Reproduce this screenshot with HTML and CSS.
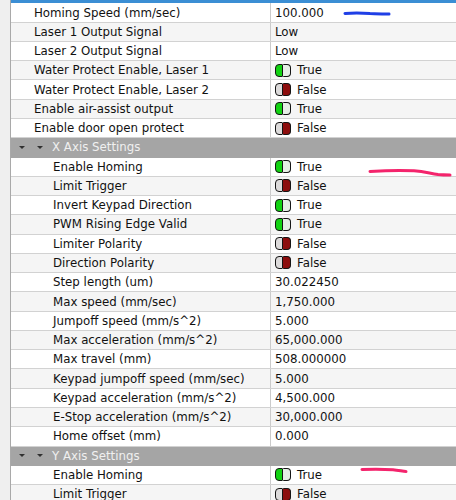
FILE: index.html
```html
<!DOCTYPE html>
<html>
<head>
<meta charset="utf-8">
<link rel="stylesheet" href="styles.css">
</head>
<body>
<div class="frame">
  <div class="gutter"></div>
  <div class="tree">
    <div class="selbar"></div>

    <div class="row"><div class="lbl top">Homing Speed (mm/sec)</div><div class="val">100.000</div></div>
    <div class="row alt"><div class="lbl top">Laser 1 Output Signal</div><div class="val">Low</div></div>
    <div class="row"><div class="lbl top">Laser 2 Output Signal</div><div class="val">Low</div></div>
    <div class="row alt"><div class="lbl top">Water Protect Enable, Laser 1</div><div class="val"><span class="tg on"><i></i><b></b></span>True</div></div>
    <div class="row"><div class="lbl top">Water Protect Enable, Laser 2</div><div class="val"><span class="tg off"><i></i><b></b></span>False</div></div>
    <div class="row alt"><div class="lbl top">Enable air-assist output</div><div class="val"><span class="tg on"><i></i><b></b></span>True</div></div>
    <div class="row"><div class="lbl top">Enable door open protect</div><div class="val"><span class="tg off"><i></i><b></b></span>False</div></div>

    <div class="row head"><span class="arr"></span><span class="arr"></span><span class="htxt">X Axis Settings</span></div>
    <div class="row"><div class="lbl sub">Enable Homing</div><div class="val"><span class="tg on"><i></i><b></b></span>True</div></div>
    <div class="row alt"><div class="lbl sub">Limit Trigger</div><div class="val"><span class="tg off"><i></i><b></b></span>False</div></div>
    <div class="row"><div class="lbl sub">Invert Keypad Direction</div><div class="val"><span class="tg on"><i></i><b></b></span>True</div></div>
    <div class="row alt"><div class="lbl sub">PWM Rising Edge Valid</div><div class="val"><span class="tg on"><i></i><b></b></span>True</div></div>
    <div class="row"><div class="lbl sub">Limiter Polarity</div><div class="val"><span class="tg off"><i></i><b></b></span>False</div></div>
    <div class="row alt"><div class="lbl sub">Direction Polarity</div><div class="val"><span class="tg off"><i></i><b></b></span>False</div></div>
    <div class="row"><div class="lbl sub">Step length (um)</div><div class="val">30.022450</div></div>
    <div class="row alt"><div class="lbl sub">Max speed (mm/sec)</div><div class="val">1,750.000</div></div>
    <div class="row"><div class="lbl sub">Jumpoff speed (mm/s^2)</div><div class="val">5.000</div></div>
    <div class="row alt"><div class="lbl sub">Max acceleration (mm/s^2)</div><div class="val">65,000.000</div></div>
    <div class="row"><div class="lbl sub">Max travel (mm)</div><div class="val">508.000000</div></div>
    <div class="row alt"><div class="lbl sub">Keypad jumpoff speed (mm/sec)</div><div class="val">5.000</div></div>
    <div class="row"><div class="lbl sub">Keypad acceleration (mm/s^2)</div><div class="val">4,500.000</div></div>
    <div class="row alt"><div class="lbl sub">E-Stop acceleration (mm/s^2)</div><div class="val">30,000.000</div></div>
    <div class="row"><div class="lbl sub">Home offset (mm)</div><div class="val">0.000</div></div>

    <div class="row head"><span class="arr"></span><span class="arr"></span><span class="htxt">Y Axis Settings</span></div>
    <div class="row"><div class="lbl sub">Enable Homing</div><div class="val"><span class="tg on"><i></i><b></b></span>True</div></div>
    <div class="row alt"><div class="lbl sub">Limit Trigger</div><div class="val"><span class="tg off"><i></i><b></b></span>False</div></div>
  </div>
</div>

<svg class="mark" width="456" height="500" viewBox="0 0 456 500">
  <path d="M345 13.5 C355 12.8 362 13 370 13.6 C378 14 384 14.2 389 14" stroke="#1f3fe6" stroke-width="3" fill="none" stroke-linecap="round"/>
  <path d="M370 171.5 C385 170.5 400 170 414 170.8 C425 171.5 430 173.5 438 174.5 C443 175 447 175 450 175" stroke="#f4246c" stroke-width="3" fill="none" stroke-linecap="round"/>
  <path d="M362 469.5 C375 469 385 469.2 393 469.8 C399 470.3 403 471.5 406 471.5" stroke="#f4246c" stroke-width="3" fill="none" stroke-linecap="round"/>
</svg>
</body>
</html>
```

FILE: styles.css
```css
html, body {
  margin: 0;
  padding: 0;
  background: #ffffff;
}

body {
  width: 456px;
  height: 500px;
  overflow: hidden;
  position: relative;
  font-family: "DejaVu Sans", Verdana, sans-serif;
  font-size: 11.8px;
  color: #111111;
}

.frame {
  display: flex;
  height: 500px;
}

.gutter {
  width: 10px;
  flex: none;
  background: #efefef;
  border-right: 1px solid #a9a9a9;
}

.tree {
  flex: 1;
  display: flex;
  flex-direction: column;
  overflow: hidden;
}

.selbar {
  height: 3.4px;
  flex: none;
  background: #3b8ed4;
}

.row {
  flex: none;
  height: 19.27px;
  box-sizing: border-box;
  border-bottom: 1px solid #d2d2d2;
  display: grid;
  grid-template-columns: 260px 1fr;
  background: #ffffff;
}

.row.alt {
  background: #f5f5f5;
}

.lbl {
  border-right: 1px solid #cbcbcb;
  display: flex;
  align-items: center;
  white-space: nowrap;
  overflow: hidden;
}

.lbl.top {
  padding-left: 23px;
}

.lbl.sub {
  padding-left: 42px;
}

.val {
  display: flex;
  align-items: center;
  padding-left: 4px;
  white-space: nowrap;
  overflow: hidden;
}

.tg {
  display: inline-flex;
  width: 16px;
  height: 13px;
  margin-right: 6px;
  flex: none;
}

.tg i, .tg b {
  display: block;
  width: 8px;
  height: 13px;
  box-sizing: border-box;
  border: 1.3px solid #141414;
}

.tg i {
  border-radius: 4px 1px 1px 4px;
}

.tg b {
  border-radius: 1px 4px 4px 1px;
  border-left: none;
}

.tg.on i { background: #12d312; }
.tg.on b { background: #e6efe6; }
.tg.off i { background: #dcdada; }
.tg.off b { background: #8c0d0d; }

.row.head {
  display: flex;
  align-items: center;
  background: #a5a5a5;
  border-bottom: 1px solid #a5a5a5;
}

.arr {
  width: 0;
  height: 0;
  border-left: 3.5px solid transparent;
  border-right: 3.5px solid transparent;
  border-top: 3.5px solid #303030;
  margin-left: 7.5px;
  margin-right: 7px;
}

.arr + .arr {
  margin-left: 5px;
  margin-right: 0;
}

.htxt {
  margin-left: 9.5px;
  color: #f0f0f0;
}

.mark {
  position: absolute;
  left: 0;
  top: 0;
  pointer-events: none;
}
```
